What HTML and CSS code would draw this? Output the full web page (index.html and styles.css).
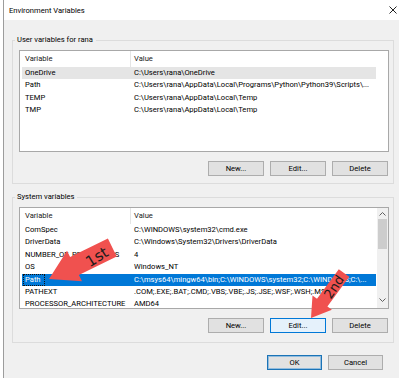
FILE: index.html
```html
<!DOCTYPE html>
<html lang="en">
<head>
  <meta charset="UTF-8" />
  <title>Environment Variables</title>
  <link rel="stylesheet" href="styles.css">
</head>
<body>
  <div class="window">
    <div class="titlebar">
      <span class="title">Environment Variables</span>
      <svg class="close" width="8" height="8" viewBox="0 0 8 8"><path d="M0.5 0.5L7.5 7.5M7.5 0.5L0.5 7.5" stroke="#222" stroke-width="1"/></svg>
    </div>

    <div class="content">
      <fieldset class="group">
        <legend>User variables for rana</legend>
        <div class="list">
          <div class="rows">
            <div class="row head"><span class="c1">Variable</span><span class="c2">Value</span></div>
            <div class="row idle-sel"><span class="c1">OneDrive</span><span class="c2">C:\Users\rana\OneDrive</span></div>
            <div class="row"><span class="c1">Path</span><span class="c2">C:\Users\rana\AppData\Local\Programs\Python\Python39\Scripts\...</span></div>
            <div class="row"><span class="c1">TEMP</span><span class="c2">C:\Users\rana\AppData\Local\Temp</span></div>
            <div class="row"><span class="c1">TMP</span><span class="c2">C:\Users\rana\AppData\Local\Temp</span></div>
          </div>
        </div>
        <div class="btn-row">
          <button class="btn">New...</button>
          <button class="btn">Edit...</button>
          <button class="btn">Delete</button>
        </div>
      </fieldset>

      <fieldset class="group second">
        <legend>System variables</legend>
        <div class="list">
          <div class="rows">
            <div class="row head"><span class="c1">Variable</span><span class="c2">Value</span></div>
            <div class="row"><span class="c1">ComSpec</span><span class="c2">C:\WINDOWS\system32\cmd.exe</span></div>
            <div class="row"><span class="c1">DriverData</span><span class="c2">C:\Windows\System32\Drivers\DriverData</span></div>
            <div class="row"><span class="c1">NUMBER_OF_PROCESSORS</span><span class="c2">4</span></div>
            <div class="row"><span class="c1">OS</span><span class="c2">Windows_NT</span></div>
            <div class="row active-sel"><span class="c1"><span class="focus">Path</span></span><span class="c2">C:\msys64\mingw64\bin;C:\WINDOWS\system32;C:\WINDOWS;C:\...</span></div>
            <div class="row"><span class="c1">PATHEXT</span><span class="c2">.COM;.EXE;.BAT;.CMD;.VBS;.VBE;.JS;.JSE;.WSF;.WSH;.MSC</span></div>
            <div class="row"><span class="c1">PROCESSOR_ARCHITECTURE</span><span class="c2">AMD64</span></div>
          </div>
          <div class="scrollbar">
            <svg width="7" height="4" viewBox="0 0 7 4"><path d="M0.5 3.5L3.5 0.5L6.5 3.5" fill="none" stroke="#606060"/></svg>
            <div class="thumb"></div>
            <svg class="down" width="7" height="4" viewBox="0 0 7 4"><path d="M0.5 0.5L3.5 3.5L6.5 0.5" fill="none" stroke="#606060"/></svg>
          </div>
        </div>
        <div class="btn-row">
          <button class="btn">New...</button>
          <button class="btn hot">Edit...</button>
          <button class="btn">Delete</button>
        </div>
      </fieldset>

      <div class="dlg-btns">
        <button class="btn wide default">OK</button>
        <button class="btn wide">Cancel</button>
      </div>
    </div>
  </div>

  <!-- hand-drawn annotation arrows on top of the dialog -->
  <svg class="marks" width="399" height="378" viewBox="0 0 399 378">
    <polygon points="107.9,238.5 70.1,257 67,250.7 49,279 82,281.3 78.9,275 116.7,256.5" fill="#f0514f"/>
    <text x="97" y="257" transform="rotate(-32 97 257)" class="mark-text big">1st</text>
    <polygon points="338.8,269.2 317,298.8 312.5,295.5 311,318 331.9,309.7 327.4,306.4 349.2,276.8" fill="#f0514f"/>
    <text x="334" y="287" transform="rotate(-56 334 287)" class="mark-text">2nd</text>
  </svg>
</body>
</html>
```

FILE: styles.css
```css
* {
  box-sizing: border-box;
}

body {
  margin: 0;
  background: #fff;
  font-family: Roboto, 'Liberation Sans', sans-serif;
  font-size: 7.6px;
  color: #000;
}

.window {
  margin-left: 3px;
  height: 378px;
  border-left: 1px solid #9c9c9c;
  background: #f0f0f0;
  overflow: hidden;
}

.titlebar {
  height: 20px;
  background: #fff;
  display: flex;
  align-items: center;
  justify-content: space-between;
  padding: 0 2px 0 5px;
}

.content {
  padding-top: 15px;
}

.group {
  margin: 0 5px 0 8px;
  padding: 5px 4px 7px 6px;
  border: 1px solid #dcdcdc;
  min-width: 0;
}

.group.second {
  margin-top: 8px;
  padding-bottom: 9px;
}

legend {
  line-height: 10px;
  padding: 0 3px 0 2px;
  margin-left: -4px;
}

.list {
  height: 102px;
  border: 1px solid #a8a8a8;
  background: #fff;
  display: flex;
  overflow: hidden;
}

.rows {
  width: 356px;
}

.row {
  display: flex;
  width: 354px;
  height: 12.4px;
  line-height: 12.4px;
  margin-left: 2px;
  white-space: nowrap;
}

.row.head {
  height: 16px;
  line-height: 16px;
  color: #1a1a1a;
}

.c1 {
  width: 108px;
  padding-left: 3px;
  overflow: hidden;
}

.c2 {
  flex: 1;
  padding-left: 4px;
  overflow: hidden;
}

.head .c2 {
  border-left: 1px solid #e5e5e5;
  padding-left: 3px;
}

.idle-sel {
  background: #e5e5e5;
}

.active-sel {
  background: #0078d7;
  color: #fff;
}

.active-sel .c1 {
  padding-left: 1px;
}

.focus {
  display: inline-block;
  height: 12.4px;
  line-height: 10.4px;
  padding: 0 3px 0 1px;
  border: 1px dotted #111;
}

.scrollbar {
  width: 11px;
  margin-left: 1px;
  background: #f0f0f0;
  display: flex;
  flex-direction: column;
  align-items: center;
  padding: 4px 0 6px;
}

.thumb {
  width: 9px;
  height: 30px;
  margin-top: 3px;
  background: #cdcdcd;
}

.scrollbar .down {
  margin-top: auto;
}

.btn-row {
  display: flex;
  justify-content: flex-end;
  gap: 6px;
  margin-top: 9px;
  margin-right: 1px;
}

.btn {
  width: 56px;
  height: 15px;
  padding: 0;
  border: 1px solid #adadad;
  background: #e1e1e1;
  font-family: inherit;
  font-size: 7.6px;
  color: #000;
}

.btn.hot {
  background: #e5f1fb;
  border-color: #0078d7;
}

.btn.wide {
  width: 55px;
}

.btn.default {
  border-color: #1b73b6;
  box-shadow: inset 0 0 0 1px rgba(0, 120, 215, 0.35);
}

.dlg-btns {
  display: flex;
  justify-content: flex-end;
  gap: 6px;
  margin-top: 12px;
  padding-right: 16px;
}

.marks {
  position: absolute;
  top: 0;
  left: 0;
  pointer-events: none;
}

.mark-text {
  font-family: 'DejaVu Sans', sans-serif;
  font-size: 13px;
  fill: #1c1c1c;
  text-anchor: middle;
  dominant-baseline: central;
}

.mark-text.big {
  font-size: 15px;
}
```
